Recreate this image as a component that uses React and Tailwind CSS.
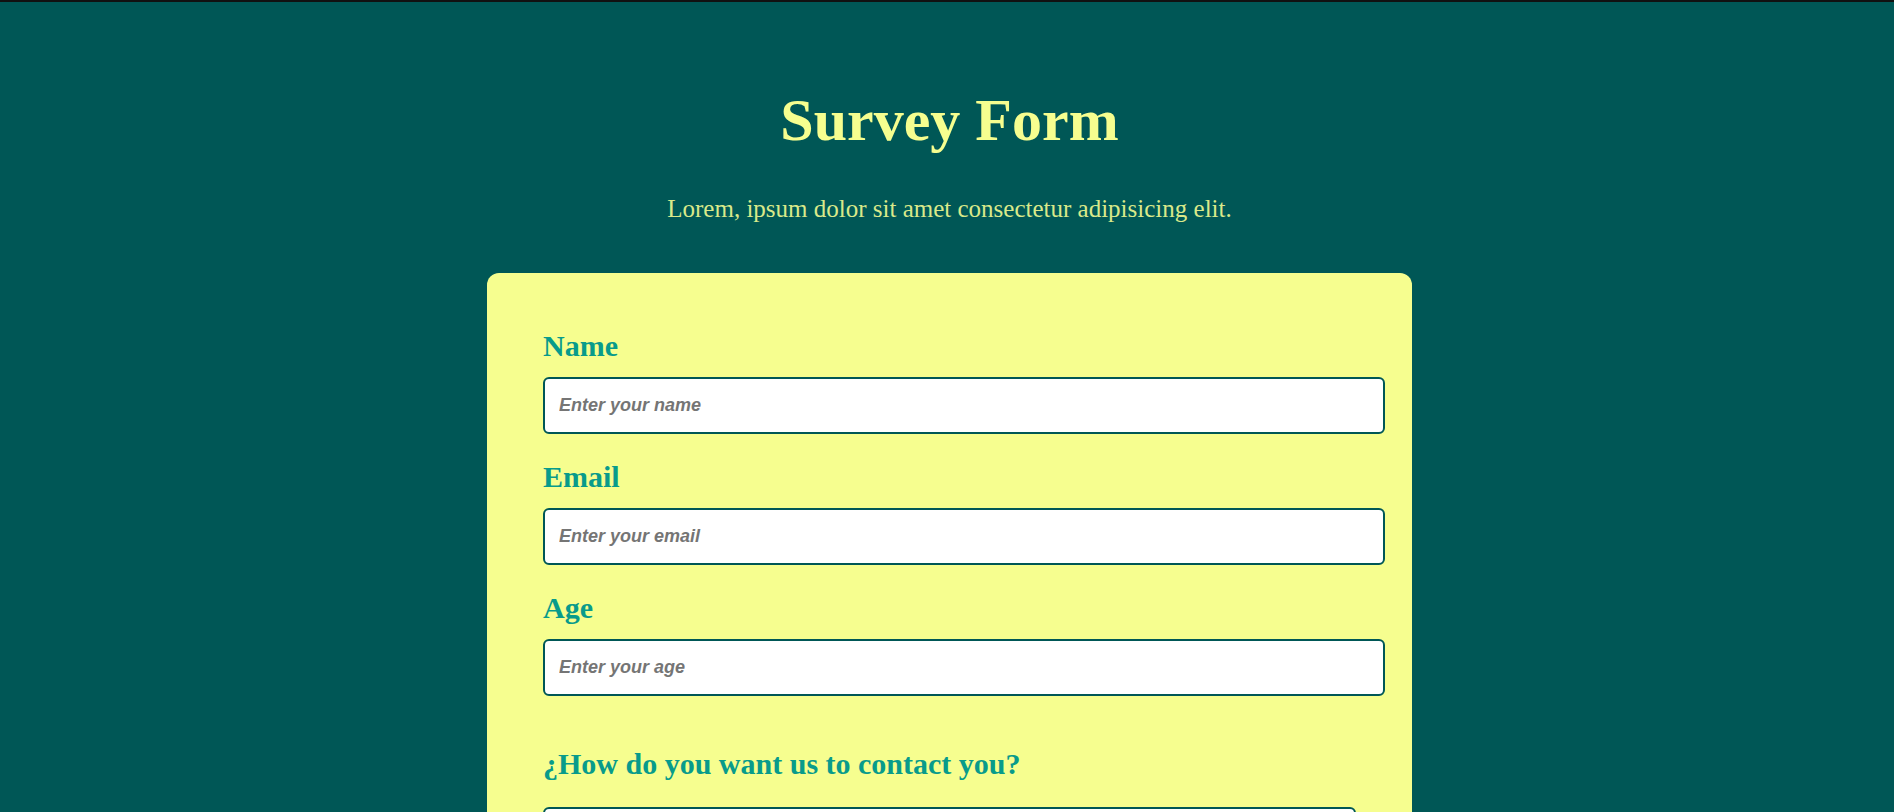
const fields = [
  { id: "name", label: "Name", type: "text", placeholder: "Enter your name" },
  { id: "email", label: "Email", type: "email", placeholder: "Enter your email" },
  { id: "age", label: "Age", type: "number", placeholder: "Enter your age" },
];

function Field({ id, label, type, placeholder }) {
  return (
    <div className="flex flex-col">
      <label
        htmlFor={id}
        className="mb-[16px] text-[30px] leading-[30px] font-bold text-[#089b8b]"
      >
        {label}
      </label>
      <input
        id={id}
        type={type}
        placeholder={placeholder}
        className="h-[57px] w-[842px] rounded-[6px] border-2 border-[#005756] bg-white pl-[14px] font-['Liberation_Sans',Arial,sans-serif] text-[18px] font-bold italic text-[#333] outline-none placeholder:text-[#757575]"
      />
    </div>
  );
}

export default function App() {
  return (
    <main className="flex min-h-screen flex-col items-center border-t-2 border-[#111] bg-[#005756] pl-[5px] font-['Liberation_Serif','Times_New_Roman',serif]">
      <h1 className="mt-[88px] text-[60px] leading-[60px] font-bold text-[#f6fe8f]">
        Survey Form
      </h1>
      <p className="mt-[46px] text-[25px] leading-[25px] text-[#d9e98a]">
        Lorem, ipsum dolor sit amet consectetur adipisicing elit.
      </p>

      <form className="mt-[52px] w-[925px] rounded-xl bg-[#f6fe8f] px-[56px] pt-[58px] pb-[40px]">
        <div className="flex flex-col gap-[28px]">
          {fields.map((field) => (
            <Field key={field.id} {...field} />
          ))}
        </div>

        <div className="mt-[53px] flex flex-col">
          <label
            htmlFor="contact"
            className="mb-[28px] text-[30px] leading-[30px] font-bold text-[#089b8b]"
          >
            ¿How do you want us to contact you?
          </label>
          <select
            id="contact"
            className="h-[57px] w-full rounded-[6px] border-2 border-[#005756] bg-white px-[14px] font-['Liberation_Sans',Arial,sans-serif] text-[18px] outline-none"
          >
            <option>Email</option>
            <option>Phone</option>
          </select>
        </div>
      </form>
    </main>
  );
}
